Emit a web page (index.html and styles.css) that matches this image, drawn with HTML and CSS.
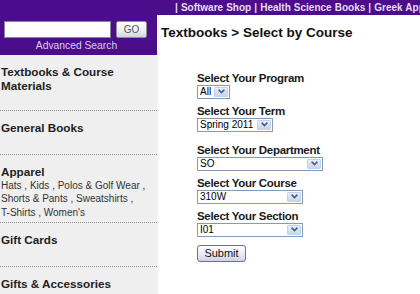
FILE: index.html
```html
<!DOCTYPE html>
<html lang="en">
<head>
    <meta charset="UTF-8">
    <meta name="viewport" content="width=device-width, initial-scale=1.0">
    <title>Textbooks - Select by Course</title>
    <link rel="stylesheet" href="styles.css">
</head>
<body>
    <div class="topbar">
        | <a href="#">Software Shop</a> | <a href="#">Health Science Books</a> | <a href="#">Greek Apparel</a>
    </div>

    <div class="page">
        <aside class="sidebar">
            <form class="search">
                <div class="search-row">
                    <input type="text" class="search-input">
                    <button type="button" class="go-button">GO</button>
                </div>
                <a href="#" class="advanced-link">Advanced Search</a>
            </form>

            <div class="nav-block nav-block-first">
                <a href="#" class="nav-title">Textbooks &amp; Course Materials</a>
            </div>
            <div class="nav-block">
                <a href="#" class="nav-title">General Books</a>
            </div>
            <div class="nav-block nav-block-list">
                <a href="#" class="nav-title">Apparel</a>
                <div class="nav-sub">
                    <a href="#">Hats</a> , <a href="#">Kids</a> , <a href="#">Polos &amp; Golf Wear</a> ,
                    <a href="#">Shorts &amp; Pants</a> , <a href="#">Sweatshirts</a> ,
                    <a href="#">T-Shirts</a> , <a href="#">Women's</a>
                </div>
            </div>
            <div class="nav-block">
                <a href="#" class="nav-title">Gift Cards</a>
            </div>
            <div class="nav-block">
                <a href="#" class="nav-title">Gifts &amp; Accessories</a>
            </div>
        </aside>

        <main class="content">
            <h1>Textbooks &gt; Select by Course</h1>

            <form class="course-form">
                <div class="field">
                    <label for="program">Select Your Program</label>
                    <div class="select-box select-program">
                        <select id="program"><option>All</option></select>
                        <span class="arrow"><svg width="7" height="5" viewBox="0 0 7 5"><polyline points="0.6,0.6 3.5,3.6 6.4,0.6" fill="none" stroke="#4a5d82" stroke-width="1.6"/></svg></span>
                    </div>
                </div>
                <div class="field field-term">
                    <label for="term">Select Your Term</label>
                    <div class="select-box select-term">
                        <select id="term"><option>Spring 2011</option></select>
                        <span class="arrow"><svg width="7" height="5" viewBox="0 0 7 5"><polyline points="0.6,0.6 3.5,3.6 6.4,0.6" fill="none" stroke="#4a5d82" stroke-width="1.6"/></svg></span>
                    </div>
                </div>
                <div class="field">
                    <label for="department">Select Your Department</label>
                    <div class="select-box select-department">
                        <select id="department"><option>SO</option></select>
                        <span class="arrow"><svg width="7" height="5" viewBox="0 0 7 5"><polyline points="0.6,0.6 3.5,3.6 6.4,0.6" fill="none" stroke="#4a5d82" stroke-width="1.6"/></svg></span>
                    </div>
                </div>
                <div class="field">
                    <label for="course">Select Your Course</label>
                    <div class="select-box select-course">
                        <select id="course"><option>310W</option></select>
                        <span class="arrow"><svg width="7" height="5" viewBox="0 0 7 5"><polyline points="0.6,0.6 3.5,3.6 6.4,0.6" fill="none" stroke="#4a5d82" stroke-width="1.6"/></svg></span>
                    </div>
                </div>
                <div class="field">
                    <label for="section">Select Your Section</label>
                    <div class="select-box select-course">
                        <select id="section"><option>I01</option></select>
                        <span class="arrow"><svg width="7" height="5" viewBox="0 0 7 5"><polyline points="0.6,0.6 3.5,3.6 6.4,0.6" fill="none" stroke="#4a5d82" stroke-width="1.6"/></svg></span>
                    </div>
                </div>
                <button type="button" class="submit-button">Submit</button>
            </form>
        </main>
    </div>
</body>
</html>
```

FILE: styles.css
```css
body {
    margin: 0;
    font-family: "Liberation Sans", Arial, sans-serif;
    background-color: #fff;
    overflow: hidden;
}

a {
    text-decoration: none;
}

.topbar {
    height: 15px;
    padding-left: 175px;
    background-color: #4b0d8b;
    color: #e6ddf3;
    font-size: 10px;
    font-weight: bold;
    line-height: 15px;
    word-spacing: 0.3px;
    white-space: nowrap;
    overflow: hidden;
}

.topbar a {
    color: #e6ddf3;
}

.page {
    display: flex;
    align-items: stretch;
    height: 279px;
    overflow: hidden;
}

.sidebar {
    width: 157px;
    flex-shrink: 0;
    background-color: #efefef;
    border-right: 2px solid #f7f7f7;
}

/* purple search box */
.search {
    height: 40px;
    box-sizing: border-box;
    padding: 6px 0 0 4px;
    margin: 0;
    background-color: #4b0d8b;
}

.search-row {
    display: flex;
    align-items: center;
    gap: 5px;
}

.search-input {
    width: 107px;
    height: 17px;
    box-sizing: border-box;
    margin: 0;
    padding: 0 2px;
    border: 1px solid #8c7fae;
    background-color: #fff;
}

.go-button {
    width: 31px;
    height: 17px;
    box-sizing: border-box;
    padding: 0;
    border: 1px solid #8d8d9c;
    border-radius: 2px;
    background: linear-gradient(#ffffff, #ececf2 60%, #d3d5e0);
    color: #555;
    font-family: inherit;
    font-size: 10px;
}

.advanced-link {
    display: block;
    width: 145px;
    margin-top: 2px;
    text-align: center;
    font-size: 10.3px;
    line-height: 12px;
    color: #dccff0;
}

.nav-block {
    padding: 10px 0 19px 1px;
    border-bottom: 1px dotted #8f8f8f;
}

.nav-block-first {
    padding-bottom: 17px;
}

.nav-block-list {
    padding-bottom: 3px;
}

.nav-title {
    display: block;
    font-size: 11.7px;
    font-weight: bold;
    line-height: 14px;
    color: #222;
}

.nav-sub {
    font-size: 10px;
    line-height: 13.4px;
    color: #333;
}

.nav-sub a {
    color: #333;
    white-space: nowrap;
}

.content {
    flex: 1;
    padding-left: 2px;
}

h1 {
    margin: 9.5px 0 0;
    font-size: 13.5px;
    line-height: 16px;
    color: #111;
}

.course-form {
    margin: 30px 0 0;
    padding-left: 36px;
}

.field {
    margin-bottom: 5px;
}

.field-term {
    margin-bottom: 11px;
}

.field label {
    display: block;
    font-size: 11.5px;
    font-weight: bold;
    letter-spacing: -0.3px;
    line-height: 14px;
    color: #1a1a1a;
}

/* old style dropdowns */
.select-box {
    display: flex;
    height: 14px;
    box-sizing: border-box;
    border: 1px solid #7f9db9;
    background-color: #fff;
}

.select-program {
    width: 33px;
}

.select-term {
    width: 76px;
}

.select-department {
    width: 126px;
}

.select-course {
    width: 106px;
}

.select-box select {
    flex: 1;
    min-width: 0;
    height: 12px;
    margin: 0;
    padding: 0 0 0 2px;
    border: 0;
    background: transparent;
    appearance: none;
    -webkit-appearance: none;
    font-family: inherit;
    font-size: 10px;
    line-height: 12px;
    color: #000;
    outline: none;
}

.arrow {
    display: flex;
    align-items: center;
    justify-content: center;
    flex-shrink: 0;
    width: 14px;
    height: 10px;
    margin: 1px;
    box-sizing: border-box;
    border: 1px solid #c3d1ec;
    border-radius: 1px;
    background: linear-gradient(#e8eefa, #c9d6ef);
}

.submit-button {
    width: 49px;
    height: 17px;
    margin-top: 3px;
    box-sizing: border-box;
    padding: 0;
    border: 1px solid #6f7090;
    border-radius: 3px;
    background: linear-gradient(#fdfdff, #ebebf4 55%, #cfd0e3);
    font-family: inherit;
    font-size: 11px;
    color: #111;
}
```
